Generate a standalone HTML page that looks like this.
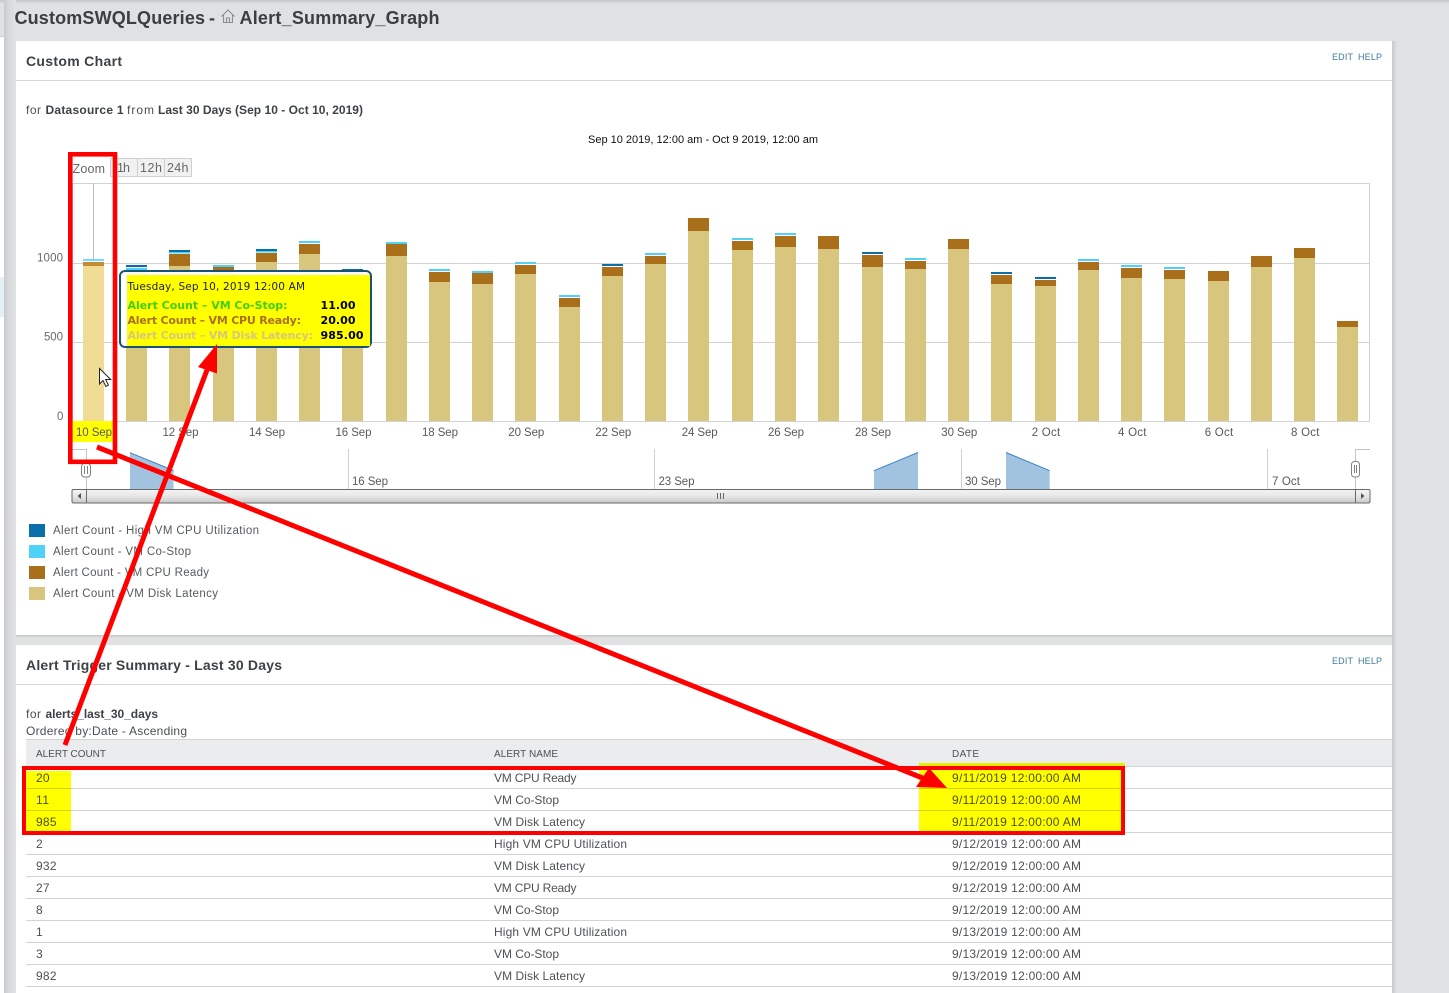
<!DOCTYPE html>
<html lang="en">
<head>
<meta charset="utf-8">
<title>Alert_Summary_Graph</title>
<style>
html,body{margin:0;padding:0;width:1449px;height:993px;overflow:hidden;background:#dfe1e3}
svg{display:block}
text{font-family:"Liberation Sans",sans-serif;white-space:pre}
.h{font-weight:bold;font-size:18px;fill:#3a3f44}
.t{font-weight:bold;font-size:14px;fill:#3d4247}
.s{font-size:12px;fill:#4a4f54}
.b{font-size:12px;font-weight:bold;fill:#3d4247}
.e{font-size:9px;fill:#3d7c9e}
.a{font-size:11.5px;fill:#666a70}
.l{font-size:11.5px;fill:#555a60}
.c{font-size:12px;fill:#4d5156}
.th{font-size:10px;fill:#4d5156}
.tt{font-family:"DejaVu Sans",sans-serif;font-size:10.5px;fill:#222}
.tb{font-family:"DejaVu Sans",sans-serif;font-size:11px;font-weight:bold}
</style>
</head>
<body>
<svg width="1449" height="993" viewBox="0 0 1449 993" xmlns="http://www.w3.org/2000/svg">
<defs>
<linearGradient id="sl" x1="0" x2="1" y1="0" y2="0"><stop offset="0" stop-color="#c9cacc"/><stop offset=".35" stop-color="#d6d7d9"/><stop offset="1" stop-color="#e0e2e4"/></linearGradient>
<linearGradient id="sr" x1="0" x2="1" y1="0" y2="0"><stop offset="0" stop-color="#c8c9cb"/><stop offset="1" stop-color="#dfe1e3"/></linearGradient>
<linearGradient id="st" x1="0" x2="0" y1="0" y2="1"><stop offset="0" stop-color="#c6c7c9"/><stop offset="1" stop-color="#dfe1e3"/></linearGradient>
<linearGradient id="sb" x1="0" x2="0" y1="0" y2="1"><stop offset="0" stop-color="#f4f4f4"/><stop offset=".5" stop-color="#e6e6e6"/><stop offset="1" stop-color="#c8c8c8"/></linearGradient>
</defs>

<!-- page -->
<rect width="1449" height="993" fill="#dfe1e3"/>
<rect width="1449" height="4" fill="url(#st)"/>
<rect x="0" y="37" width="4" height="956" fill="#fff"/>
<rect x="0" y="36" width="4" height="1" fill="#c8c9cb"/>
<rect x="0" y="277" width="4" height="40" fill="#e3f0f6"/>
<rect x="4" y="0" width="12" height="993" fill="url(#sl)"/>
<rect x="1392" y="41" width="5" height="952" fill="url(#sr)"/>
<rect x="16" y="635" width="1376" height="3" fill="url(#st)"/>

<text class="h" x="14.5" y="24" textLength="190.5">CustomSWQLQueries</text>
<text class="h" x="209" y="24" textLength="6">-</text>
<path d="M221.5 16.5 228 10l6.5 6.5M223.5 15v7.5h9V15M226.5 22.5v-4.5h3v4.5" fill="none" stroke="#8c8f92" stroke-width="1.1"/>
<text class="h" x="239.5" y="24" textLength="200">Alert_Summary_Graph</text>

<!-- panels -->
<rect x="16" y="41" width="1376" height="594" fill="#fff"/>
<rect x="16" y="645" width="1376" height="348" fill="#fff"/>
<rect x="16" y="80" width="1376" height="1" fill="#d4d5d7"/>
<rect x="16" y="684" width="1376" height="1" fill="#d4d5d7"/>

<text class="t" x="26" y="66" textLength="96">Custom Chart</text>
<text class="e" x="1332" y="60" textLength="21">EDIT</text>
<text class="e" x="1358" y="60" textLength="24">HELP</text>

<text class="s" x="26" y="114" textLength="15">for</text>
<text class="b" x="45.5" y="114" textLength="78">Datasource 1</text>
<text class="s" x="127" y="114" textLength="27">from</text>
<text class="b" x="158" y="114" textLength="205">Last 30 Days (Sep 10 - Oct 10, 2019)</text>

<text x="588" y="143" font-size="11" fill="#111" textLength="230">Sep 10 2019, 12:00 am - Oct 9 2019, 12:00 am</text>

<!-- plot frame / grid -->
<path d="M72.5 183.5H1369.5V421.5H72.5ZM72.5 263.5H1369.5M72.5 342.5H1369.5" fill="none" stroke="#d2d2d2" stroke-width="1"/>
<path d="M93.5 183V259" stroke="#bdbdbd" stroke-width="1"/>

<!-- range selector -->
<text x="72.5" y="173" font-size="12.5" fill="#666" textLength="32.5">Zoom</text>
<rect x="110.5" y="158.5" width="81" height="18" fill="#f1f1f1" stroke="#cfcfcf"/>
<path d="M137.5 158.5v18M164.5 158.5v18" stroke="#cfcfcf"/>
<text x="117" y="172" font-size="12.5" fill="#666" textLength="13">1h</text>
<text x="140" y="172" font-size="12.5" fill="#666" textLength="22">12h</text>
<text x="167" y="172" font-size="12.5" fill="#666" textLength="21.5">24h</text>

<!-- y axis -->
<text class="a" x="37" y="261.5" textLength="26">1000</text>
<text class="a" x="44" y="340.5" textLength="19">500</text>
<text class="a" x="57" y="420" textLength="6.5">0</text>

<!-- bars: tan -->
<path fill="#d8c67f" d="M126 276h21V421h-21zM169 266h21V421h-21zM213 277h21V421h-21zM256 262h21V421h-21zM299 254h21V421h-21zM342 282h21V421h-21zM386 256h21V421h-21zM429 282h21V421h-21zM472 284h21V421h-21zM515 274h21V421h-21zM559 307h21V421h-21zM602 276h21V421h-21zM645 264h21V421h-21zM688 231h21V421h-21zM732 250h21V421h-21zM775 247h21V421h-21zM818 249h21V421h-21zM862 267h21V421h-21zM905 269h21V421h-21zM948 249h21V421h-21zM991 284h21V421h-21zM1035 286h21V421h-21zM1078 270h21V421h-21zM1121 278h21V421h-21zM1164 279h21V421h-21zM1208 281h21V421h-21zM1251 267h21V421h-21zM1294 258h21V421h-21zM1337 327h21V421h-21z"/>
<!-- bars: brown -->
<path fill="#a96f1b" d="M126 270h21v6h-21zM169 254h21v12h-21zM213 267h21v10h-21zM256 253h21v9h-21zM299 244h21v10h-21zM342 271h21v11h-21zM386 244h21v12h-21zM429 272h21v10h-21zM472 273h21v11h-21zM515 265h21v9h-21zM559 298h21v9h-21zM602 267h21v9h-21zM645 256h21v8h-21zM688 218h21v13h-21zM732 241h21v9h-21zM775 236h21v11h-21zM818 236h21v13h-21zM862 255h21v12h-21zM905 261h21v8h-21zM948 239h21v10h-21zM991 275h21v9h-21zM1035 280h21v6h-21zM1078 262h21v8h-21zM1121 268h21v10h-21zM1164 270h21v9h-21zM1208 271h21v10h-21zM1251 256h21v11h-21zM1294 248h21v10h-21zM1337 321h21v6h-21z"/>
<!-- bars: cyan -->
<path fill="#4ed2f5" d="M126 268h21v2h-21zM169 252h21v1.5h-21zM213 265h21v2h-21zM256 251h21v1.5h-21zM299 241h21v2h-21zM386 242h21v2h-21zM429 269h21v2h-21zM472 271h21v2h-21zM515 262h21v2h-21zM559 295h21v2h-21zM645 253h21v2h-21zM732 238h21v2h-21zM775 233h21v2h-21zM905 258h21v2h-21zM1078 259h21v2h-21zM1121 265h21v2h-21zM1164 267h21v2h-21z"/>
<!-- bars: blue -->
<path fill="#0a6ea8" d="M126 265h21v2h-21zM169 250h21v2h-21zM256 249h21v2h-21zM342 269h21v2h-21zM602 264h21v2h-21zM862 252h21v2h-21zM991 272h21v2h-21zM1035 277h21v2h-21z"/>
<!-- hovered bar -->
<rect x="83" y="259" width="21" height="2" fill="#6fdef8"/>
<rect x="83" y="262" width="21" height="4" fill="#c38b34"/>
<rect x="83" y="266" width="21" height="155" fill="#f0dc94"/>

<!-- x axis -->
<rect x="72" y="421" width="41" height="21" fill="#ff0"/>
<text class="l" x="76" y="436" textLength="36">10 Sep</text>
<text class="l" x="162.5" y="436" textLength="36">12 Sep</text>
<text class="l" x="249" y="436" textLength="36">14 Sep</text>
<text class="l" x="335.5" y="436" textLength="36">16 Sep</text>
<text class="l" x="422" y="436" textLength="36">18 Sep</text>
<text class="l" x="508.3" y="436" textLength="36">20 Sep</text>
<text class="l" x="595.3" y="436" textLength="36">22 Sep</text>
<text class="l" x="681.7" y="436" textLength="36">24 Sep</text>
<text class="l" x="768" y="436" textLength="36">26 Sep</text>
<text class="l" x="855" y="436" textLength="36">28 Sep</text>
<text class="l" x="941.3" y="436" textLength="36">30 Sep</text>
<text class="l" x="1031.7" y="436" textLength="28.5">2 Oct</text>
<text class="l" x="1118" y="436" textLength="28.5">4 Oct</text>
<text class="l" x="1204.7" y="436" textLength="28.5">6 Oct</text>
<text class="l" x="1291" y="436" textLength="28.5">8 Oct</text>

<!-- navigator -->
<path d="M348.5 449v40M654.5 449v40M961.5 449v40M1267.5 449v40" stroke="#d0d0d0"/>
<path d="M72 449.5H86.5V489M1370 449.5H1355.5V489" fill="none" stroke="#c4c4c4"/>
<text class="l" x="352" y="485" textLength="36">16 Sep</text>
<text class="l" x="658.5" y="485" textLength="36">23 Sep</text>
<text class="l" x="965" y="485" textLength="36">30 Sep</text>
<text class="l" x="1272" y="485" textLength="28">7 Oct</text>
<path d="M130 452.7 173.5 470.5V489H130Z" fill="#a1c3e0"/>
<path d="M130 452.7 173.5 470.5" stroke="#3f82c4" fill="none"/>
<path d="M874 470.7 918 452.5V489H874Z" fill="#a1c3e0"/>
<path d="M874 470.7 918 452.5" stroke="#3f82c4" fill="none"/>
<path d="M1006 452.5 1049.7 470.7V489H1006Z" fill="#a1c3e0"/>
<path d="M1006 452.5 1049.7 470.7" stroke="#3f82c4" fill="none"/>
<rect x="81.5" y="463.5" width="9" height="13.5" rx="3" fill="#fff" stroke="#808080"/>
<path d="M84.5 466v8M87.5 466v8" stroke="#808080"/>
<rect x="1351.5" y="461.5" width="8" height="15.5" rx="3" fill="#fff" stroke="#808080"/>
<path d="M1354.5 465v8M1356.5 465v8" stroke="#808080"/>

<!-- scrollbar -->
<rect x="72" y="489.5" width="1298" height="13.5" rx="1.5" fill="url(#sb)" stroke="#6a6a6a"/>
<path d="M86.5 489.5V503M1355.5 489.5V503" stroke="#6a6a6a"/>
<path d="M81 493v6l-3.5-3zM1361 493v6l3.5-3z" fill="#555"/>
<path d="M717.5 493v6M720.5 493v6M723.5 493v6" stroke="#666"/>

<!-- legend -->
<rect x="29" y="524" width="16" height="13" fill="#0a6ea8"/>
<rect x="29" y="545" width="16" height="13" fill="#4ed2f5"/>
<rect x="29" y="566" width="16" height="13" fill="#a96f1b"/>
<rect x="29" y="587" width="16" height="13" fill="#d8c67f"/>
<text class="l" x="53" y="534" textLength="206">Alert Count - High VM CPU Utilization</text>
<text class="l" x="53" y="555" textLength="138">Alert Count - VM Co-Stop</text>
<text class="l" x="53" y="576" textLength="156">Alert Count - VM CPU Ready</text>
<text class="l" x="53" y="597" textLength="165">Alert Count - VM Disk Latency</text>

<!-- tooltip -->
<rect x="120" y="271" width="251" height="76" rx="5" fill="#fff" fill-opacity=".95" stroke="#1a5276" stroke-width="2"/>
<rect x="127" y="275" width="243" height="71" fill="#ff0"/>
<text class="tt" x="127.5" y="290" textLength="177.5">Tuesday, Sep 10, 2019 12:00 AM</text>
<text class="tb" x="127.5" y="309" textLength="160" fill="#45cc14">Alert Count – VM Co-Stop:</text>
<text class="tb" x="127.5" y="324" textLength="173.5" fill="#a96f1b">Alert Count – VM CPU Ready:</text>
<text class="tb" x="127.5" y="339" textLength="185.5" fill="#d8c67f">Alert Count – VM Disk Latency:</text>
<text class="tb" x="320.5" y="309" textLength="35" fill="#000">11.00</text>
<text class="tb" x="320.5" y="324" textLength="35" fill="#000">20.00</text>
<text class="tb" x="320.5" y="339" textLength="43" fill="#000">985.00</text>

<!-- cursor -->
<path d="M99.5 368.5V384l3.5-3.5 2.8 6 2.6-1.2-2.7-5.8h5z" fill="#fff" stroke="#222" stroke-width="1"/>

<!-- second panel -->
<text class="t" x="26" y="670" textLength="256">Alert Trigger Summary - Last 30 Days</text>
<text class="e" x="1332" y="664" textLength="21">EDIT</text>
<text class="e" x="1358" y="664" textLength="24">HELP</text>
<text class="s" x="26" y="718" textLength="15">for</text>
<text class="b" x="45.5" y="718" textLength="112.5">alerts_last_30_days</text>
<text class="s" x="26" y="735" textLength="161">Ordered by:Date - Ascending</text>

<rect x="26" y="739" width="1366" height="28" fill="#ebecee"/>
<path d="M26 739.5H1392M26 766.5H1392M26 788.5H1392M26 810.5H1392M26 832.5H1392M26 854.5H1392M26 876.5H1392M26 898.5H1392M26 920.5H1392M26 942.5H1392M26 964.5H1392M26 986.5H1392" stroke="#d2d3d5"/>
<text class="th" x="36" y="757" textLength="70">ALERT COUNT</text>
<text class="th" x="494" y="757" textLength="64">ALERT NAME</text>
<text class="th" x="952" y="757" textLength="27">DATE</text>

<text class="c" x="36" y="782" textLength="13.5">20</text>
<text class="c" x="494" y="782" textLength="82.5">VM CPU Ready</text>
<text class="c" x="952" y="782" textLength="129">9/11/2019 12:00:00 AM</text>
<text class="c" x="36" y="804" textLength="13">11</text>
<text class="c" x="494" y="804" textLength="65">VM Co-Stop</text>
<text class="c" x="952" y="804" textLength="129">9/11/2019 12:00:00 AM</text>
<text class="c" x="36" y="826" textLength="20.5">985</text>
<text class="c" x="494" y="826" textLength="91">VM Disk Latency</text>
<text class="c" x="952" y="826" textLength="129">9/11/2019 12:00:00 AM</text>
<text class="c" x="36" y="848" textLength="7">2</text>
<text class="c" x="494" y="848" textLength="133">High VM CPU Utilization</text>
<text class="c" x="952" y="848" textLength="129">9/12/2019 12:00:00 AM</text>
<text class="c" x="36" y="870" textLength="20.5">932</text>
<text class="c" x="494" y="870" textLength="91">VM Disk Latency</text>
<text class="c" x="952" y="870" textLength="129">9/12/2019 12:00:00 AM</text>
<text class="c" x="36" y="892" textLength="13.5">27</text>
<text class="c" x="494" y="892" textLength="82.5">VM CPU Ready</text>
<text class="c" x="952" y="892" textLength="129">9/12/2019 12:00:00 AM</text>
<text class="c" x="36" y="914" textLength="7">8</text>
<text class="c" x="494" y="914" textLength="65">VM Co-Stop</text>
<text class="c" x="952" y="914" textLength="129">9/12/2019 12:00:00 AM</text>
<text class="c" x="36" y="936" textLength="6">1</text>
<text class="c" x="494" y="936" textLength="133">High VM CPU Utilization</text>
<text class="c" x="952" y="936" textLength="129">9/13/2019 12:00:00 AM</text>
<text class="c" x="36" y="958" textLength="7">3</text>
<text class="c" x="494" y="958" textLength="65">VM Co-Stop</text>
<text class="c" x="952" y="958" textLength="129">9/13/2019 12:00:00 AM</text>
<text class="c" x="36" y="980" textLength="20.5">982</text>
<text class="c" x="494" y="980" textLength="91">VM Disk Latency</text>
<text class="c" x="952" y="980" textLength="129">9/13/2019 12:00:00 AM</text>

<!-- highlights -->
<rect x="26" y="771" width="45" height="60" fill="#ff0" style="mix-blend-mode:multiply"/>
<rect x="919" y="763" width="206" height="68" fill="#ff0" style="mix-blend-mode:multiply"/>

<!-- annotations -->
<rect x="70.3" y="154.3" width="44.7" height="307.5" fill="none" stroke="#f00" stroke-width="4.6"/>
<rect x="24" y="768" width="1099" height="65" fill="none" stroke="#f00" stroke-width="4"/>
<path d="M65 745 207 370" stroke="#f00" stroke-width="5" fill="none"/>
<path d="M217 344 198 367 217 373.5Z" fill="#f00"/>
<path d="M97 447 925 779" stroke="#f00" stroke-width="5" fill="none"/>
<path d="M947 788 916 787 929 768Z" fill="#f00"/>
</svg>
</body>
</html>
